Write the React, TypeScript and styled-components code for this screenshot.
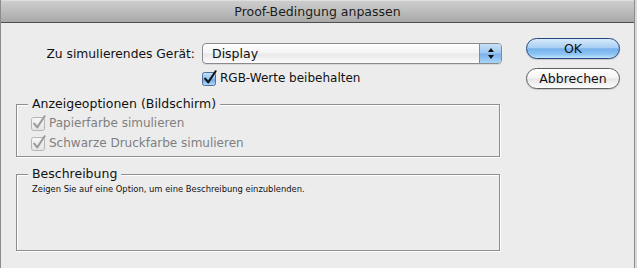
import styled, { createGlobalStyle } from 'styled-components';

const GlobalStyle = createGlobalStyle`
  html, body {
    margin: 0;
    padding: 0;
    background: #d9d9d9;
  }
  body {
    font-family: "DejaVu Sans", "Liberation Sans", sans-serif;
    font-size: 12px;
    color: #111;
  }
`;

const Window = styled.div`
  width: 633px;
  height: 268px;
  border-left: 1px solid #8c8c8c;
  border-right: 1px solid #8c8c8c;
  background: #ececec;
  display: flex;
  flex-direction: column;
`;

const TitleBar = styled.div`
  height: 23px;
  box-sizing: border-box;
  border-top: 1px solid #dedede;
  border-bottom: 1px solid #4f4f4f;
  background: linear-gradient(to bottom, #cdcdcd 0%, #bcbcbc 50%, #a8a8a8 100%);
  display: flex;
  align-items: center;
  justify-content: center;
  font-size: 12.5px;
  color: #1b1b1b;
  padding-bottom: 1px;
`;

const Content = styled.div`
  display: flex;
  align-items: flex-start;
`;

const LeftPane = styled.div`
  width: 486px;
  padding: 20px 0 0 15px;
  display: flex;
  flex-direction: column;
`;

const DeviceGrid = styled.div`
  display: grid;
  grid-template-columns: 1fr 300px;
  column-gap: 7px;
  row-gap: 4px;
  align-items: center;
`;

const FieldLabel = styled.label`
  text-align: right;
  white-space: nowrap;
  font-size: 12.3px;
`;

const Popup = styled.div`
  height: 21px;
  box-sizing: border-box;
  border: 1px solid #8a8a8a;
  border-radius: 4px;
  background: linear-gradient(to bottom, #ffffff 0%, #f4f4f4 45%, #e9e9e9 55%, #fbfbfb 100%);
  display: flex;
  align-items: stretch;
  overflow: hidden;
  box-shadow: 0 1px 0 rgba(0, 0, 0, 0.08);
`;

const PopupValue = styled.span`
  flex: 1;
  padding-left: 9px;
  display: flex;
  align-items: center;
  font-size: 12.5px;
`;

const Stepper = styled.span`
  width: 21px;
  border-left: 1px solid #6b8fbf;
  background: linear-gradient(to bottom, #c7e0f8 0%, #9fc8f0 48%, #79b0ea 52%, #a9d6fa 100%);
  display: flex;
  align-items: center;
  justify-content: center;
`;

const CheckRow = styled.label<{ $disabled?: boolean }>`
  display: flex;
  align-items: center;
  height: 20px;
  gap: 2px;
  color: ${(p) => (p.$disabled ? '#7f7f7f' : '#111')};
  white-space: nowrap;
`;

const Group = styled.section<{ $gap: number; $height?: number }>`
  position: relative;
  width: 484px;
  box-sizing: border-box;
  margin-top: ${(p) => p.$gap}px;
  padding: 8px 0 3px 14px;
  border: 1px solid #8e8e8e;
  box-shadow: 1px 1px 0 #ffffff, inset 1px 1px 0 #ffffff;
  height: ${(p) => (p.$height ? `${p.$height}px` : 'auto')};
`;

/* sits on top of the group's top border, like a legend */
const Legend = styled.span`
  position: absolute;
  top: -9px;
  left: 11px;
  padding: 0 4px;
  line-height: 16px;
  font-size: 12.5px;
  background: #ececec;
  color: #111;
  white-space: nowrap;
`;

const Hint = styled.div`
  padding: 0 0 0 1px;
  font-size: 8.4px;
  line-height: 13px;
  color: #111;
`;

const ButtonPane = styled.div`
  margin-left: 24px;
  padding-top: 15px;
  display: flex;
  flex-direction: column;
  gap: 9px;
`;

const AquaButton = styled.button<{ $default?: boolean }>`
  width: 94px;
  height: 21px;
  box-sizing: border-box;
  border-radius: 11px;
  font-family: inherit;
  font-size: 12.5px;
  color: #111;
  padding: 0 0 1px;
  border: 1px solid ${(p) => (p.$default ? '#28467d' : '#5f5f5f')};
  background: ${(p) =>
    p.$default
      ? 'linear-gradient(to bottom, #d6eafc 0%, #a9d0f4 45%, #76b1ea 52%, #8cc4f3 80%, #c0e4fd 100%)'
      : 'linear-gradient(to bottom, #ffffff 0%, #f5f5f5 45%, #e6e6e6 52%, #f2f2f2 80%, #ffffff 100%)'};
  box-shadow: 0 1px 1px rgba(0, 0, 0, 0.15);
`;

const Box = ({ disabled, checked }: { disabled?: boolean; checked?: boolean }) => (
  <svg width="16" height="16" viewBox="0 0 16 16">
    <defs>
      <linearGradient id="aquaBox" x1="0" y1="0" x2="0" y2="1">
        <stop offset="0" stopColor="#c9e1f8" />
        <stop offset="0.5" stopColor="#8fc0ef" />
        <stop offset="0.55" stopColor="#6fa9e6" />
        <stop offset="1" stopColor="#b5dcfb" />
      </linearGradient>
      <linearGradient id="greyBox" x1="0" y1="0" x2="0" y2="1">
        <stop offset="0" stopColor="#f7f7f7" />
        <stop offset="1" stopColor="#e4e4e4" />
      </linearGradient>
    </defs>
    <rect
      x="0.5"
      y="2.5"
      width="13"
      height="13"
      rx="2"
      fill={disabled ? 'url(#greyBox)' : 'url(#aquaBox)'}
      stroke={disabled ? '#b5b5b5' : '#4d6f9e'}
    />
    {checked && (
      <path
        d="M3.2 8.6 L6.2 12.4 L13.6 1.2"
        fill="none"
        stroke={disabled ? '#9a9a9a' : '#111'}
        strokeWidth="2"
        strokeLinecap="round"
        strokeLinejoin="round"
      />
    )}
  </svg>
);

const Arrows = () => (
  <svg width="8" height="13" viewBox="0 0 8 13">
    <path d="M4 1 L7 5 H1 Z" fill="#111" />
    <path d="M4 12 L7 8 H1 Z" fill="#111" />
  </svg>
);

export default function App() {
  return (
    <>
      <GlobalStyle />
      <Window>
        <TitleBar>Proof-Bedingung anpassen</TitleBar>
        <Content>
          <LeftPane>
            <DeviceGrid>
              <FieldLabel>Zu simulierendes Gerät:</FieldLabel>
              <Popup>
                <PopupValue>Display</PopupValue>
                <Stepper>
                  <Arrows />
                </Stepper>
              </Popup>
              <span />
              <CheckRow>
                <Box checked />
                RGB-Werte beibehalten
              </CheckRow>
            </DeviceGrid>

            <Group $gap={16}>
              <Legend>Anzeigeoptionen (Bildschirm)</Legend>
              <CheckRow $disabled>
                <Box disabled checked />
                Papierfarbe simulieren
              </CheckRow>
              <CheckRow $disabled>
                <Box disabled checked />
                Schwarze Druckfarbe simulieren
              </CheckRow>
            </Group>

            <Group $gap={17} $height={77}>
              <Legend>Beschreibung</Legend>
              <Hint>Zeigen Sie auf eine Option, um eine Beschreibung einzublenden.</Hint>
            </Group>
          </LeftPane>
          <ButtonPane>
            <AquaButton $default>OK</AquaButton>
            <AquaButton>Abbrechen</AquaButton>
          </ButtonPane>
        </Content>
      </Window>
    </>
  );
}
